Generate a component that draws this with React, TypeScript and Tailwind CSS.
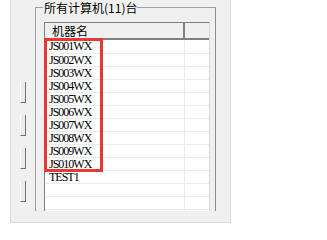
import React from 'react';

const machines = [
  'JS001WX', 'JS002WX', 'JS003WX', 'JS004WX', 'JS005WX', 'JS006WX',
  'JS007WX', 'JS008WX', 'JS009WX', 'JS010WX', 'TEST1', '', '', '',
];

const cjk = { fontFamily: '"Noto Sans CJK SC", sans-serif' };
const latin = { fontFamily: '"Liberation Serif", "Noto Sans CJK SC", serif' };

function SideButton() {
  return <div className="w-[6px] h-[21px] bg-[#ececec] border-l border-white border-r border-b border-r-[#707070] border-b-[#707070]" />;
}

export default function App() {
  return (
    <div className="w-[327px] h-[234px] bg-white overflow-hidden">
      {/* panel */}
      <div className="ml-[10px] w-[221px] h-[223px] bg-[#f0f0f0] border-l border-r border-b border-[#dcdcdc]">
        <div className="flex h-[211px] overflow-hidden">
          {/* cut-off buttons on the left */}
          <div className="w-[24px] pl-[9px] pt-[82px] flex flex-col gap-[12px]">
            <SideButton />
            <SideButton />
            <SideButton />
            <SideButton />
          </div>

          {/* group box */}
          <div className="relative w-[181px] mt-[7px] border-l border-t border-r border-[#a0a0a0] border-r-[#8c8c8c] pl-[8px] pt-[14px] pr-[5px]">
            <span
              className="absolute left-[7px] top-[-7px] bg-[#f0f0f0] pl-px text-[12px] leading-[13px] text-black whitespace-nowrap"
              style={cjk}
            >
              所有计算机(11)台
            </span>

            {/* list view */}
            <div className="relative h-[200px] bg-white border-l border-t border-[#808080] border-r border-r-[#d8d8d8]">
              <div className="flex h-[17px] bg-[#f0f0f0] border-b-2 border-[#808080]">
                <div className="w-[140px] border-r-2 border-[#808080] pl-[7px] text-[12px] leading-[16px] text-black" style={cjk}>
                  机器名
                </div>
                <div className="w-[24px]" />
              </div>
              {machines.map((name, i) => (
                <div key={i} className={`flex h-[13px] ${i > 0 ? 'border-t border-[#ebebeb]' : ''}`}>
                  <div
                    className="w-[140px] border-r border-[#ebebeb] pl-[4px] text-[12px] leading-[13px] tracking-[-1px] text-black"
                    style={latin}
                  >
                    {name}
                  </div>
                  <div className="w-[24px]" />
                </div>
              ))}

              {/* red highlight */}
              <div className="absolute left-[-1px] top-[15px] w-[59px] h-[134px] border-[3px] border-[#e53935]" />
            </div>
          </div>
        </div>
      </div>
    </div>
  );
}
